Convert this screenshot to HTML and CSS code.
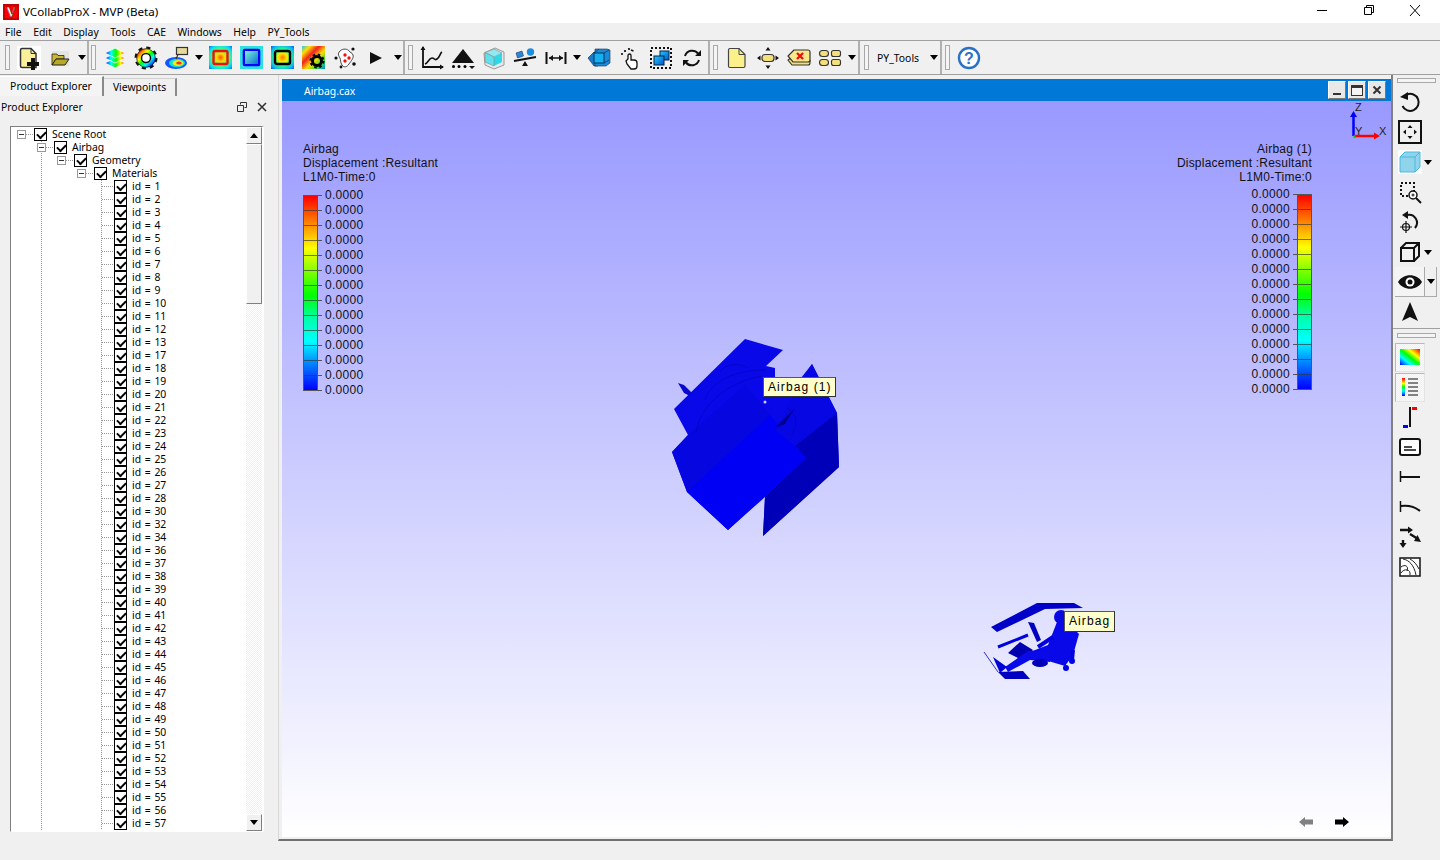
FILE: index.html
```html
<!DOCTYPE html>
<html lang="en">
<head>
<meta charset="utf-8">
<title>VCollabProX - MVP (Beta)</title>
<link rel="stylesheet" href="styles.css">
</head>
<body>
<svg class="defs" aria-hidden="true">
  <defs>
    <linearGradient id="rb" x1="0" y1="0" x2="1" y2="1"><stop offset="0" stop-color="#f00"/><stop offset=".3" stop-color="#ff0"/><stop offset=".5" stop-color="#0f0"/><stop offset=".72" stop-color="#0ff"/><stop offset="1" stop-color="#00f"/></linearGradient>
    <linearGradient id="rbd" x1="1" y1="0" x2="0" y2="1"><stop offset="0" stop-color="#f00"/><stop offset=".3" stop-color="#ff0"/><stop offset=".5" stop-color="#0f0"/><stop offset=".72" stop-color="#0ff"/><stop offset="1" stop-color="#00f"/></linearGradient>
    <linearGradient id="rbh" x1="0" y1="0" x2="1" y2="0"><stop offset="0" stop-color="#00f"/><stop offset=".3" stop-color="#0ff"/><stop offset=".55" stop-color="#0f0"/><stop offset=".78" stop-color="#ff0"/><stop offset="1" stop-color="#f00"/></linearGradient>
    <linearGradient id="rbv" x1="0" y1="0" x2="0" y2="1"><stop offset="0" stop-color="#f00"/><stop offset=".3" stop-color="#ff0"/><stop offset=".5" stop-color="#0f0"/><stop offset=".72" stop-color="#0ff"/><stop offset="1" stop-color="#00f"/></linearGradient>
    <radialGradient id="c1" r=".72"><stop offset="0" stop-color="#f50"/><stop offset=".25" stop-color="#fd0"/><stop offset=".5" stop-color="#4f7"/><stop offset=".75" stop-color="#1de"/><stop offset="1" stop-color="#06f"/></radialGradient>
    <radialGradient id="c3" r=".72"><stop offset="0" stop-color="#f70"/><stop offset=".28" stop-color="#fe0"/><stop offset=".5" stop-color="#2f8"/><stop offset=".75" stop-color="#1be"/><stop offset="1" stop-color="#05f"/></radialGradient>
    <linearGradient id="c4" x1="0" y1="0" x2="1" y2="1"><stop offset="0" stop-color="#2ce"/><stop offset=".18" stop-color="#fd0"/><stop offset=".38" stop-color="#e22"/><stop offset=".58" stop-color="#fd0"/><stop offset=".8" stop-color="#3d3"/><stop offset="1" stop-color="#08f"/></linearGradient>
    <linearGradient id="bl" x1="0" y1="0" x2="1" y2="1"><stop offset="0" stop-color="#2cf"/><stop offset="1" stop-color="#05c"/></linearGradient>
    <linearGradient id="sky" x1="0" y1="0" x2="1" y2="1"><stop offset="0" stop-color="#8fd"/><stop offset="1" stop-color="#06c"/></linearGradient>
  </defs>
</svg>

<div class="app">
  <header class="titlebar">
    <svg class="logo" viewBox="0 0 16 16"><rect width="16" height="16" fill="#e30613"/><rect x="1" y="1" width="14" height="14" fill="#f00" stroke="#600" stroke-width=".6"/><text x="8" y="13" text-anchor="middle" class="logo-v">V</text></svg>
    <span class="apptitle">VCollabProX - MVP (Beta)</span>
    <div class="winctl">
      <svg class="wc" viewBox="0 0 46 23"><path d="M17 10.500h10" stroke="#000" fill="none"/></svg>
      <svg class="wc" viewBox="0 0 46 23"><path d="M18.500 7.500h7v7h-7zM20.500 7.500v-2h7v7h-2" stroke="#000" fill="none"/></svg>
      <svg class="wc" viewBox="0 0 46 23"><path d="M18 5l10 11M28 5l-10 11" stroke="#000" fill="none"/></svg>
    </div>
  </header>

  <nav class="menubar">
    <span>File</span><span>Edit</span><span>Display</span><span>Tools</span><span>CAE</span><span>Windows</span><span>Help</span><span>PY_Tools</span>
  </nav>

  <div class="toolbar">
    <div class="tg tg1">
      <i class="grip"></i>
      <div class="tb"><svg class="ic plate" viewBox="0 0 24 24"><path d="M5 2.500h9l5 5v14H5a1.500 1.500 0 0 1-1.500-1.500V4A1.500 1.500 0 0 1 5 2.500z" fill="#fbf09a" stroke="#333" stroke-width="1.500"/><path d="M14 2.500v5h5" fill="none" stroke="#333"/><path d="M14 12h4v4h4v4h-4v4h-4v-4h-4v-4h4z" fill="#111"/></svg></div>
      <div class="tb"><svg class="ic" viewBox="0 0 24 24"><rect x="4" y="5" width="17" height="15" fill="#e4e4e4"/><path d="M4 8h5l1 1.500h6V13H8l-4 6z" fill="#c8b830" stroke="#222" stroke-width=".8"/><path d="M4 19l4-6h13l-4 6z" fill="#b8a828" stroke="#222"/></svg></div>
      <div class="dd"><i class="tri"></i></div>
    </div>
    <div class="tg tg2">
      <i class="grip"></i>
      <div class="tb"><svg class="ic" viewBox="0 0 24 24"><path d="M2 17l10-5 10 5-10 5z" fill="url(#rbh)" stroke="#fff" stroke-width=".8"/><path d="M2 12l10-5 10 5-10 5z" fill="url(#rbh)" stroke="#fff" stroke-width=".8"/><path d="M2 7l10-5 10 5-10 5z" fill="url(#rbh)" stroke="#fff" stroke-width=".8"/></svg></div>
      <div class="tb"><svg class="ic" viewBox="0 0 24 24"><circle cx="12" cy="12" r="10" fill="none" stroke="#111" stroke-width="3" stroke-dasharray="4 3.850"/><circle cx="12" cy="12" r="7.300" fill="none" stroke="url(#rb)" stroke-width="4.500"/><circle cx="12" cy="12" r="9.300" fill="none" stroke="#111" stroke-width=".7"/><circle cx="12" cy="12" r="4.500" fill="#fff" stroke="#111" stroke-width="1.500"/></svg></div>
      <div class="tb"><svg class="ic" viewBox="0 0 24 24"><ellipse cx="11" cy="17" rx="11" ry="6" fill="#15f"/><ellipse cx="12" cy="17" rx="8" ry="4.200" fill="#1dd"/><ellipse cx="13" cy="17" rx="5.500" ry="3" fill="#ee1"/><ellipse cx="14" cy="17" rx="2.800" ry="1.500" fill="#e33"/><rect x="11.500" y="1.500" width="11" height="7" fill="#e6d99a" stroke="#333" stroke-width="1.200"/><path d="M13 8.500L11 13" stroke="#333" stroke-width="1.200"/></svg></div>
      <div class="dd"><i class="tri"></i></div>
      <div class="tb"><svg class="ic sq" viewBox="0 0 23 23"><rect width="23" height="23" fill="url(#c1)"/><rect x="4.500" y="5" width="14" height="13" rx="1.500" fill="none" stroke="#e11" stroke-width="2.400"/></svg></div>
      <div class="tb"><svg class="ic sq" viewBox="0 0 24 24"><rect width="24" height="24" fill="#2fe0e0"/><rect x="4" y="4" width="16" height="16" rx="1" fill="url(#sky)" stroke="#00f" stroke-width="2.400"/></svg></div>
      <div class="tb"><svg class="ic sq" viewBox="0 0 23 23"><rect width="23" height="23" fill="url(#c3)"/><rect x="4" y="5" width="15" height="13" rx="2" fill="none" stroke="#000" stroke-width="2.400"/></svg></div>
      <div class="tb"><svg class="ic sq" viewBox="0 0 23 23"><rect width="23" height="23" fill="url(#c4)"/><circle cx="15" cy="15" r="4.500" fill="none" stroke="#000" stroke-width="3"/><circle cx="15" cy="15" r="6.500" fill="none" stroke="#000" stroke-width="2" stroke-dasharray="2.500 2.600"/></svg></div>
      <div class="tb"><svg class="ic" viewBox="0 0 24 24"><path d="M7 5c3-3 8-2 9 0s3 1 4 4-2 6-4 9-5 4-7 1-1-5-2-7-3-4 0-7z" fill="#fff" stroke="#333" stroke-width=".9"/><circle cx="12" cy="9" r="1.700" fill="#e11"/><circle cx="16" cy="12" r="1.700" fill="#e11"/><circle cx="12" cy="15" r="1.700" fill="#e11"/><circle cx="3" cy="12" r="1.600" fill="#111"/><circle cx="20" cy="3" r="1.600" fill="#111"/><circle cx="21" cy="18" r="1.800" fill="#111"/><circle cx="8" cy="21" r="1.400" fill="#111"/></svg></div>
      <div class="tb"><svg class="ic" viewBox="0 0 24 24"><path d="M6 6l12 6-12 6z" fill="#111"/></svg></div>
      <div class="dd"><i class="tri"></i></div>
    </div>
    <div class="tg tg3">
      <i class="grip"></i>
      <div class="tb"><svg class="ic" viewBox="0 0 24 24"><path d="M3 1v20h20" fill="none" stroke="#111" stroke-width="1.800"/><path d="M3 0l-2.500 4h5zM24 21l-4-2.500v5z" fill="#111"/><path d="M5 18c3-1 4-6 7-6s2 3 5 1 3-6 5-7" fill="none" stroke="#111" stroke-width="1.600"/></svg></div>
      <div class="tb"><svg class="ic" viewBox="0 0 24 24"><path d="M12 3l11 14H1z" fill="#111"/><circle cx="2.500" cy="20.500" r="1.500"/><circle cx="8" cy="20.500" r="1.500"/><circle cx="14" cy="20.500" r="1.500"/><path d="M18 20h6l-3 3z" fill="#111"/></svg></div>
      <div class="tb"><svg class="ic" viewBox="0 0 24 24"><path d="M2 7l11-5 9 4v13l-10 4-9-4z" fill="#e8e8e8" stroke="#999"/><path d="M3 6.500l9-3.500 8 4-8 4z" fill="#8feaf2" stroke="#888" stroke-width=".6"/><path d="M12 11l8-4v9l-8 4z" fill="#2fd8e8"/><path d="M3 6.500l9 4.500v9l-9-4z" fill="#60e0ea" stroke="#888" stroke-width=".6"/></svg></div>
      <div class="tb"><svg class="ic" viewBox="0 0 24 24"><path d="M1 15l22-4" stroke="#111" stroke-width="1.800"/><path d="M3 7l6-2 1.500 5-6 2z" fill="#2a86d8" stroke="#125" stroke-width=".5"/><circle cx="17.500" cy="6" r="3.700" fill="#1a8fe0"/><path d="M12 15l-3 5h6z" fill="#111"/></svg></div>
      <div class="tb"><svg class="ic" viewBox="0 0 24 24"><path d="M2.500 6v12M21.500 6v12" stroke="#111" stroke-width="2"/><path d="M5 12h14" stroke="#111" stroke-width="1.500"/><path d="M5 12l4-3v6zM19 12l-4-3v6z" fill="#111"/></svg></div>
      <div class="dd dd12"><i class="tri"></i></div>
      <div class="tb"><svg class="ic" viewBox="0 0 24 24"><path d="M1 12l6-6h6l-2 4v10H7z" fill="#1a7cc8" stroke="#124" stroke-width=".6"/><path d="M8 3h12l3 1v13l-4 3H8z" fill="#1d8ad8" stroke="#135" stroke-width=".6"/><rect x="7" y="7" width="10" height="10" fill="#15b0f0" stroke="#036"/><path d="M7 7l5-4M17 7l5-3M17 17l5-3" stroke="#036" stroke-width=".7"/></svg></div>
      <div class="tb"><svg class="ic" viewBox="0 0 24 24"><path d="M10 13V9.500a1.500 1.500 0 0 1 3 0V14h3a3 3 0 0 1 3 3v3a3 3 0 0 1-3 3h-3l-4-5-1-3z" fill="#fff" stroke="#111" stroke-width="1.300"/><circle cx="7" cy="5" r="1.100"/><circle cx="11" cy="3" r="1.100"/><circle cx="4" cy="8" r="1"/><path d="M13 4l2.500 1" stroke="#111" stroke-width="1.500"/></svg></div>
      <div class="tb"><svg class="ic" viewBox="0 0 24 24"><rect x="2" y="2" width="20" height="20" fill="none" stroke="#111" stroke-width="2" stroke-dasharray="2 2"/><rect x="11" y="5" width="9" height="9" fill="url(#bl)" stroke="#024"/><rect x="5" y="10" width="10" height="9" fill="url(#bl)" stroke="#024"/></svg></div>
      <div class="tb"><svg class="ic" viewBox="0 0 24 24"><path d="M5 10a7.500 7.500 0 0 1 13-2.500M19 14a7.500 7.500 0 0 1-13 2.500" fill="none" stroke="#111" stroke-width="2"/><path d="M21 4v6h-6zM3 20v-6h6z" fill="#111"/></svg></div>
    </div>
    <div class="tg tg4">
      <i class="grip"></i>
      <div class="tb"><svg class="ic" viewBox="0 0 24 24"><path d="M5 2.500h9l6 6V20a1.500 1.500 0 0 1-1.500 1.500H5A1.500 1.500 0 0 1 3.500 20V4A1.500 1.500 0 0 1 5 2.500z" fill="#fbf08a" stroke="#444" stroke-width="1.200"/><path d="M14 2.500v6h6" fill="none" stroke="#444"/></svg></div>
      <div class="tb"><svg class="ic" viewBox="0 0 24 24"><rect x="6" y="8.500" width="12" height="7" rx="3" fill="#f4e07a" stroke="#333" stroke-width="1.200"/><path d="M12 1l2.500 3.500h-5zM12 23l2.500-3.500h-5zM1 12l3.500-2.500v5zM23 12l-3.500-2.500v5z" fill="#111"/></svg></div>
      <div class="tb"><svg class="ic" viewBox="0 0 24 24"><path d="M6 10L1 14l4 5h16a2 2 0 0 0 2-2v-3" fill="#f4e07a" stroke="#333" stroke-width="1.100"/><path d="M7 4L1 10l5 6h15a2 2 0 0 0 2-2V6a2 2 0 0 0-2-2z" fill="#f8e88a" stroke="#333" stroke-width="1.200"/><path d="M10 7l6 6M16 7l-6 6" stroke="#e11" stroke-width="2.400"/></svg></div>
      <div class="tb"><svg class="ic" viewBox="0 0 24 24"><g fill="#f4e07a" stroke="#333" stroke-width="1.100"><rect x="1.500" y="4.500" width="9" height="6" rx="3"/><rect x="13.500" y="4.500" width="9" height="6" rx="2"/><rect x="1.500" y="13.500" width="9" height="6" rx="3"/><rect x="13.500" y="13.500" width="9" height="6" rx="2"/></g></svg></div>
      <div class="dd"><i class="tri"></i></div>
    </div>
    <div class="tg tg5">
      <i class="grip"></i>
      <span class="pytools">PY_Tools</span>
      <div class="dd"><i class="tri"></i></div>
    </div>
    <div class="tg tg6">
      <i class="grip"></i>
      <div class="tb"><svg class="ic" viewBox="0 0 24 24"><circle cx="12" cy="12" r="10" fill="#fff" stroke="#2a72c8" stroke-width="2.400"/><text x="12" y="17.500" text-anchor="middle" class="help-q">?</text></svg></div>
    </div>
  </div>

  <main class="workspace">
    <aside class="dock">
      <div class="tabs">
        <span class="tab active">Product Explorer</span>
        <span class="tab">Viewpoints</span>
      </div>
      <div class="dockhead">
        <span class="docktitle">Product Explorer</span>
        <svg class="dockbtn" viewBox="0 0 10 10"><path d="M3.500 2.500V.500h6v5h-2M.500 3.500h6v6h-6z" fill="none" stroke="#333"/></svg>
        <svg class="dockbtn" viewBox="0 0 10 10"><path d="M1 1l8 8M9 1l-8 8" fill="none" stroke="#333" stroke-width="1.600"/></svg>
      </div>
      <div class="treebox">
        <div class="tree">
          <div class="row lv0"><i class="exp"></i><i class="dots"></i><i class="cb"></i><span>Scene Root</span></div>
          <div class="rest">
            <div class="row lv1"><i class="exp"></i><i class="dots"></i><i class="cb"></i><span>Airbag</span></div>
            <div class="row lv2"><i class="exp"></i><i class="dots"></i><i class="cb"></i><span>Geometry</span></div>
            <div class="row lv3"><i class="exp"></i><i class="dots"></i><i class="cb"></i><span>Materials</span></div>
            <div class="ids">
              <div class="row leaf"><i class="stub"></i><i class="cb"></i><span>id = 1</span></div>
              <div class="row leaf"><i class="stub"></i><i class="cb"></i><span>id = 2</span></div>
              <div class="row leaf"><i class="stub"></i><i class="cb"></i><span>id = 3</span></div>
              <div class="row leaf"><i class="stub"></i><i class="cb"></i><span>id = 4</span></div>
              <div class="row leaf"><i class="stub"></i><i class="cb"></i><span>id = 5</span></div>
              <div class="row leaf"><i class="stub"></i><i class="cb"></i><span>id = 6</span></div>
              <div class="row leaf"><i class="stub"></i><i class="cb"></i><span>id = 7</span></div>
              <div class="row leaf"><i class="stub"></i><i class="cb"></i><span>id = 8</span></div>
              <div class="row leaf"><i class="stub"></i><i class="cb"></i><span>id = 9</span></div>
              <div class="row leaf"><i class="stub"></i><i class="cb"></i><span>id = 10</span></div>
              <div class="row leaf"><i class="stub"></i><i class="cb"></i><span>id = 11</span></div>
              <div class="row leaf"><i class="stub"></i><i class="cb"></i><span>id = 12</span></div>
              <div class="row leaf"><i class="stub"></i><i class="cb"></i><span>id = 13</span></div>
              <div class="row leaf"><i class="stub"></i><i class="cb"></i><span>id = 17</span></div>
              <div class="row leaf"><i class="stub"></i><i class="cb"></i><span>id = 18</span></div>
              <div class="row leaf"><i class="stub"></i><i class="cb"></i><span>id = 19</span></div>
              <div class="row leaf"><i class="stub"></i><i class="cb"></i><span>id = 20</span></div>
              <div class="row leaf"><i class="stub"></i><i class="cb"></i><span>id = 21</span></div>
              <div class="row leaf"><i class="stub"></i><i class="cb"></i><span>id = 22</span></div>
              <div class="row leaf"><i class="stub"></i><i class="cb"></i><span>id = 23</span></div>
              <div class="row leaf"><i class="stub"></i><i class="cb"></i><span>id = 24</span></div>
              <div class="row leaf"><i class="stub"></i><i class="cb"></i><span>id = 25</span></div>
              <div class="row leaf"><i class="stub"></i><i class="cb"></i><span>id = 26</span></div>
              <div class="row leaf"><i class="stub"></i><i class="cb"></i><span>id = 27</span></div>
              <div class="row leaf"><i class="stub"></i><i class="cb"></i><span>id = 28</span></div>
              <div class="row leaf"><i class="stub"></i><i class="cb"></i><span>id = 30</span></div>
              <div class="row leaf"><i class="stub"></i><i class="cb"></i><span>id = 32</span></div>
              <div class="row leaf"><i class="stub"></i><i class="cb"></i><span>id = 34</span></div>
              <div class="row leaf"><i class="stub"></i><i class="cb"></i><span>id = 36</span></div>
              <div class="row leaf"><i class="stub"></i><i class="cb"></i><span>id = 37</span></div>
              <div class="row leaf"><i class="stub"></i><i class="cb"></i><span>id = 38</span></div>
              <div class="row leaf"><i class="stub"></i><i class="cb"></i><span>id = 39</span></div>
              <div class="row leaf"><i class="stub"></i><i class="cb"></i><span>id = 40</span></div>
              <div class="row leaf"><i class="stub"></i><i class="cb"></i><span>id = 41</span></div>
              <div class="row leaf"><i class="stub"></i><i class="cb"></i><span>id = 42</span></div>
              <div class="row leaf"><i class="stub"></i><i class="cb"></i><span>id = 43</span></div>
              <div class="row leaf"><i class="stub"></i><i class="cb"></i><span>id = 44</span></div>
              <div class="row leaf"><i class="stub"></i><i class="cb"></i><span>id = 45</span></div>
              <div class="row leaf"><i class="stub"></i><i class="cb"></i><span>id = 46</span></div>
              <div class="row leaf"><i class="stub"></i><i class="cb"></i><span>id = 47</span></div>
              <div class="row leaf"><i class="stub"></i><i class="cb"></i><span>id = 48</span></div>
              <div class="row leaf"><i class="stub"></i><i class="cb"></i><span>id = 49</span></div>
              <div class="row leaf"><i class="stub"></i><i class="cb"></i><span>id = 50</span></div>
              <div class="row leaf"><i class="stub"></i><i class="cb"></i><span>id = 51</span></div>
              <div class="row leaf"><i class="stub"></i><i class="cb"></i><span>id = 52</span></div>
              <div class="row leaf"><i class="stub"></i><i class="cb"></i><span>id = 53</span></div>
              <div class="row leaf"><i class="stub"></i><i class="cb"></i><span>id = 54</span></div>
              <div class="row leaf"><i class="stub"></i><i class="cb"></i><span>id = 55</span></div>
              <div class="row leaf"><i class="stub"></i><i class="cb"></i><span>id = 56</span></div>
              <div class="row leaf"><i class="stub"></i><i class="cb"></i><span>id = 57</span></div>
            </div>
          </div>
        </div>
        <div class="vscroll">
          <div class="sbtn"><i class="tri up"></i></div>
          <div class="thumb"></div>
          <div class="track"></div>
          <div class="sbtn"><i class="tri"></i></div>
        </div>
      </div>
    </aside>

    <section class="mdi">
      <div class="mdiwin">
        <div class="wintitle">
          <span class="winname">Airbag.cax</span>
          <div class="winbtns">
            <span class="wbtn"><i class="wmin"></i></span>
            <span class="wbtn"><i class="wmax"></i></span>
            <span class="wbtn"><svg class="wx" viewBox="0 0 10 10"><path d="M1.500 1.500l7 7M8.500 1.500l-7 7" stroke="#333" stroke-width="2"/></svg></span>
          </div>
        </div>
        <div class="viewport">
          <svg class="scene" viewBox="282 101 1108 737">
            <!-- airbag model 1 -->
            <polygon points="745,339 783,350 766,366 775,368 775,378 790,392 812,364 837,413 839,467 763,536 765,497 728,530 687,492 672,452 688,435 674,409" fill="#0808e8"/>
            <polygon points="837,413 839,467 763,536 765,497 806,458 795,446" fill="#0000b8"/>
            <polygon points="687,492 770,415 806,458 728,530" fill="#0000f4"/>
            <polygon points="672,452 688,435 745,385 770,415 687,492" fill="#0606e0"/>
            <polygon points="812,364 837,413 795,446 775,430" fill="#0707e4"/>
            <polygon points="775,428 795,408 785,424" fill="#000090"/>
            <path d="M705,400c5-18 30-30 60-30M696,432c4-25 30-50 66-56M720,372c5-8 18-10 28-4M787,408c8 4 12 14 5 27" fill="none" stroke="#0404c4" stroke-width=".8"/>
            <polygon points="678,383 684,385 692,393 690,396 684,393" fill="#0808d0"/>
            <circle cx="765" cy="402" r="1.500" fill="#c8ccff"/>
            <!-- occupant model -->
            <polygon points="991,627 1037,603 1074,603 1083,608 1045,609 997,632" fill="#0000c8"/>
            <circle cx="1061" cy="617" r="7" fill="#0808e0"/>
            <polygon points="1057,622 1066,622 1075,630 1079,634 1073,655 1065,666 1045,660 1030,652 1048,645" fill="#0808e8"/>
            <path d="M1053,637l-15,10M1073,650l-1,10" stroke="#0000e0" stroke-width="4" fill="none"/>
            <circle cx="1072" cy="661" r="3" fill="#0000e8"/>
            <circle cx="1066" cy="668" r="3" fill="#0000e8"/>
            <polygon points="1028,622 1034,623 1041,640 1037,642" fill="#0000c0"/>
            <path d="M998,647l30-12" stroke="#0000e0" stroke-width="3"/>
            <polygon points="1008,653 1020,642 1033,650 1022,660" fill="#0000b0"/>
            <polygon points="1005,667 1028,651 1052,650 1050,662 1030,660 1008,672" fill="#0a0ae8"/>
            <ellipse cx="1040" cy="663" rx="8" ry="4" fill="#0000b8"/>
            <polygon points="998,672 1023,671 1030,679 1005,679" fill="#0000c0"/>
            <polygon points="993,657 1007,667 1000,673" fill="#0000d8"/>
            <path d="M984,652l14,20" stroke="#3030d0"/>
            <!-- triad -->
            <path d="M1353.500,136v-22" stroke="#00f" stroke-width="2.500"/><path d="M1353.500,111l-3.500,6h7z" fill="#00f"/>
            <path d="M1354,136h22" stroke="#f00" stroke-width="2.500"/><path d="M1380,136l-6-3.500v7z" fill="#f00"/>
            <path d="M1353.500,136.500h2" stroke="#0c0" stroke-width="2.500"/>
            <text x="1355" y="111" class="axis">Z</text><text x="1355" y="135" class="axis">Y</text><text x="1379" y="135" class="axis">X</text>
          </svg>

          <div class="legend left">
            <div class="legtext"><div>Airbag</div><div>Displacement :Resultant</div><div>L1M0-Time:0</div></div>
            <div class="scale">
              <div class="bar"></div>
              <div class="vals"><span>0.0000</span><span>0.0000</span><span>0.0000</span><span>0.0000</span><span>0.0000</span><span>0.0000</span><span>0.0000</span><span>0.0000</span><span>0.0000</span><span>0.0000</span><span>0.0000</span><span>0.0000</span><span>0.0000</span><span>0.0000</span></div>
            </div>
          </div>
          <div class="legend right">
            <div class="legtext"><div>Airbag (1)</div><div>Displacement :Resultant</div><div>L1M0-Time:0</div></div>
            <div class="scale">
              <div class="vals"><span>0.0000</span><span>0.0000</span><span>0.0000</span><span>0.0000</span><span>0.0000</span><span>0.0000</span><span>0.0000</span><span>0.0000</span><span>0.0000</span><span>0.0000</span><span>0.0000</span><span>0.0000</span><span>0.0000</span><span>0.0000</span></div>
              <div class="bar"></div>
            </div>
          </div>

          <div class="tag tag1">Airbag (1)</div>
          <div class="tag tag2">Airbag</div>

          <svg class="nav navl" viewBox="0 0 14 12"><path d="M0 6l6-5v2.500h8v5H6V11z" fill="#808080"/></svg>
          <svg class="nav navr" viewBox="0 0 14 12"><path d="M14 6L8 1v2.500H0v5h8V11z" fill="#000"/></svg>
        </div>
      </div>
    </section>

    <aside class="sidebar">
      <i class="hgrip"></i>
      <div class="sb"><svg class="ic" viewBox="0 0 24 24"><path d="M9 4.500A8.500 8.500 0 1 1 4.500 16" fill="none" stroke="#111" stroke-width="2"/><path d="M2 7l8-5v8z" fill="#111"/></svg></div>
      <div class="sb"><svg class="ic" viewBox="0 0 24 24"><rect x="1" y="1" width="22" height="22" fill="none" stroke="#111" stroke-width="2"/><path d="M12 5l2.500 3h-5zM12 19l2.500-3h-5zM5 12l3-2.500v5zM19 12l-3-2.500v5z" fill="#111"/></svg></div>
      <div class="sb"><svg class="ic" viewBox="0 0 24 24"><rect width="24" height="24" fill="#fff"/><path d="M2 7l5-5h15v15l-5 5H2z" fill="#8fd4ea" stroke="#4ab8e0"/><path d="M2 7h15v15M17 7l5-5" fill="none" stroke="#4ab8e0"/></svg><div class="dd"><i class="tri"></i></div></div>
      <div class="sb"><svg class="ic" viewBox="0 0 24 24"><rect x="3" y="3" width="13" height="13" fill="none" stroke="#111" stroke-width="2" stroke-dasharray="2 2"/><circle cx="15" cy="15" r="4" fill="#fff" stroke="#111" stroke-width="1.500"/><path d="M18 18l5 5" stroke="#111" stroke-width="2"/><path d="M13.500 15h3M15 13.500v3" stroke="#111"/></svg></div>
      <div class="sb"><svg class="ic" viewBox="0 0 24 24"><path d="M9 5a8 8 0 0 1 8 13" fill="none" stroke="#111" stroke-width="2"/><path d="M4 5l6-4v8z" fill="#111"/><circle cx="8" cy="17" r="3.500" fill="none" stroke="#111" stroke-width="1.200"/><path d="M2 17h12M8 11v12" stroke="#111" stroke-width="1.200"/></svg></div>
      <div class="sb"><svg class="ic" viewBox="0 0 24 24"><path d="M3 8h13v13H3zM3 8l5-5h13v13l-5 5M16 8l5-5" fill="none" stroke="#111" stroke-width="2"/></svg><div class="dd"><i class="tri"></i></div></div>
      <div class="sb eyewrap"><span class="eyebtn"><svg class="ic" viewBox="0 0 24 24"><path d="M0 12c5-9 19-9 24 0-5 9-19 9-24 0z" fill="#111"/><circle cx="12" cy="12" r="4.500" fill="#fff"/><circle cx="12" cy="12" r="2.500" fill="#111"/></svg></span><span class="eyedd"><i class="tri"></i></span></div>
      <div class="sb"><svg class="ic" viewBox="0 0 24 24"><path d="M12 2l8 19-8-4-8 4z" fill="#111"/></svg></div>
      <i class="hrule"></i>
      <i class="hgrip"></i>
      <div class="sb"><span class="pressed"><svg class="ic" viewBox="0 0 24 24"><rect x="2" y="4" width="20" height="16" fill="url(#rbd)"/></svg></span></div>
      <div class="sb"><span class="pressed"><svg class="ic" viewBox="0 0 24 24"><rect x="4" y="3" width="3" height="18" fill="url(#rbv)"/><path d="M10 4h10M10 8h10M10 12h10M10 16h10M10 20h10" stroke="#111" stroke-width="1.200"/></svg></span></div>
      <div class="sb"><svg class="ic" viewBox="0 0 24 24"><path d="M12 2v20" stroke="#111" stroke-width="2"/><rect x="14" y="2" width="5" height="3" fill="#f00"/><rect x="5" y="20" width="5" height="3" fill="#00f"/></svg></div>
      <div class="sb"><svg class="ic" viewBox="0 0 24 24"><rect x="2" y="4" width="20" height="16" rx="2" fill="#fff" stroke="#111" stroke-width="2"/><path d="M6 12h8M6 15h12" stroke="#111" stroke-width="1.500"/></svg></div>
      <div class="sb"><svg class="ic" viewBox="0 0 24 24"><path d="M2.500 6v11" stroke="#111" stroke-width="1.500"/><path d="M3 12h19" stroke="#111" stroke-width="2"/></svg></div>
      <div class="sb"><svg class="ic" viewBox="0 0 24 24"><path d="M2.500 6v11" stroke="#111" stroke-width="1.500"/><path d="M3 11c7-1 14 1 19 5" fill="none" stroke="#111" stroke-width="2"/></svg></div>
      <div class="sb"><svg class="ic" viewBox="0 0 24 24"><path d="M2 5h9M5 15v6M12 9l8 5" stroke="#111" stroke-width="2.400"/><path d="M15 5l-5-3.500v7zM5 23l3.500-5h-7zM23 17l-7-1 3.500-6z" fill="#111"/></svg></div>
      <div class="sb"><svg class="ic" viewBox="0 0 24 24"><rect x="2" y="3" width="20" height="18" fill="#fff" stroke="#111" stroke-width="1.500"/><path d="M3 12c4-3 8-1 6 4M3 18c3-5 10-4 9 2M5 4c6 1 11 6 13 16M12 4c4 2 7 6 9 10" fill="none" stroke="#222"/></svg></div>
    </aside>
  </main>

  <footer class="status"></footer>
</div>
</body>
</html>
```
FILE: styles.css
```css
* { box-sizing: border-box; }
html, body { margin: 0; padding: 0; height: 100%; overflow: hidden; }
body { background: #f0f0f0; color: #000; font: 10.400px/13px "Noto Sans", sans-serif; }
i { display: block; font-style: normal; }
.defs { position: absolute; width: 0; height: 0; }
.app { display: flex; flex-direction: column; width: 1440px; height: 860px; }

/* title + menu */
.titlebar { display: flex; align-items: center; height: 23px; background: #fff; padding-left: 3px; flex: none; }
.logo { width: 16px; height: 16px; margin-right: 4px; }
.logo-v { font: bold 14px "Liberation Serif", serif; fill: #fff; stroke: #300; stroke-width: .4px; }
.apptitle { font-size: 11.600px; }
.winctl { margin-left: auto; display: flex; padding-right: 2px; }
.wc { width: 46px; height: 23px; display: block; }
.menubar { display: flex; height: 17px; flex: none; align-items: center; padding: 2px 0 0 5px; gap: 11.500px; background: #f0f0f0; }

/* toolbar */
.toolbar { display: flex; height: 35px; flex: none; border-top: 1px solid #a0a0a0; border-bottom: 1px solid #a0a0a0; }
.tg { display: flex; align-items: center; height: 33px; border-right: 2px solid #b0b0b0; }
.tg1 { width: 89px; padding-left: 5px; }
.tg2 { width: 317px; padding-left: 3px; margin-left: -1px; }
.tg3 { width: 305px; padding-left: 3px; }
.tg4 { width: 150px; padding-left: 3px; }
.tg5 { width: 82px; padding-left: 4px; }
.tg6 { border-right: 0; padding-left: 3px; }
.grip { width: 5px; height: 25px; margin-right: 3px; border: 1px solid #a8a8a8; background: #f4f4f4; flex: none; }
.tb { width: 31px; height: 31px; display: flex; align-items: center; justify-content: center; flex: none; }
.dd { width: 13px; height: 31px; display: flex; align-items: center; justify-content: center; flex: none; }
.dd12 { width: 12px; }
.tri { width: 0; height: 0; border-left: 4.500px solid transparent; border-right: 4.500px solid transparent; border-top: 5px solid #000; }
.tri.up { border-top: 0; border-bottom: 5px solid #000; }
.ic { width: 24px; height: 24px; display: block; flex: none; }
.plate { background: #fff; }
.sq { width: 23px; height: 23px; }
.pytools { margin: 2px 0 0 5px; width: 53px; }
.help-q { font: bold 16px "Liberation Sans", sans-serif; fill: #2a72c8; }

/* workspace */
.workspace { display: flex; flex: 1; min-height: 0; }
.dock { width: 278px; flex: none; display: flex; flex-direction: column; }
.tabs { display: flex; height: 20px; margin-top: 1px; flex: none; align-items: flex-end; }
.tab { height: 18px; padding: 2px 8px 0; width: 73px; border-right: 2px solid #8a8a8a; border-top: 1px solid #d0d0d0; background: #f0f0f0; text-align: center; white-space: nowrap; }
.tab.active { height: 20px; width: 104px; padding-top: 3px; border-top: 1px solid #fff; background: #f4f4f4; }
.dockhead { display: flex; align-items: center; height: 22px; padding: 0 11px 0 1px; flex: none; gap: 10px; }
.docktitle { margin-right: auto; }
.dockbtn { width: 10px; height: 10px; display: block; }
.treebox { display: flex; margin: 8px 0 0 10px; width: 254px; height: 706px; border: 1px solid #808080; border-width: 1px 2px 1px 1px; border-color: #808080 #fff #fff #808080; background: #fff; overflow: hidden; flex: none; }
.tree { flex: 1; min-width: 0; overflow: hidden; padding-top: 1px; }
.rest { background: linear-gradient(#999 50%, transparent 50%) 30px 0 / 1px 2px repeat-y; }
.ids { background: linear-gradient(#999 50%, transparent 50%) 90px 0 / 1px 2px repeat-y; }
.row { display: flex; align-items: center; height: 13px; white-space: nowrap; }
.row span { margin-left: 5px; }
.leaf span { word-spacing: 1px; }
.lv0 { padding-left: 6px; }
.lv1 { padding-left: 26px; }
.lv2 { padding-left: 46px; }
.lv3 { padding-left: 66px; }
.leaf { padding-left: 91px; }
.exp { width: 9px; height: 9px; border: 1px solid #999; background: linear-gradient(#333, #333) center / 5px 1px no-repeat #fff; flex: none; }
.dots { width: 9px; height: 1px; margin-right: -1px; background: linear-gradient(90deg, #999 50%, transparent 50%) 0 0 / 2px 1px repeat-x; flex: none; }
.stub { width: 12px; height: 1px; background: linear-gradient(90deg, #999 50%, transparent 50%) 0 0 / 2px 1px repeat-x; flex: none; }
.cb { width: 13px; height: 13px; border: 1.500px solid #000; background: #fff; position: relative; flex: none; }
.cb::after { content: ""; position: absolute; left: 2px; top: 1.500px; width: 7px; height: 4px; border-left: 2px solid #000; border-bottom: 2px solid #000; transform: rotate(-45deg); }
.vscroll { width: 16px; flex: none; display: flex; flex-direction: column; }
.sbtn { height: 17px; flex: none; background: #f0f0f0; border: 1px solid; border-color: #fff #808080 #808080 #fff; display: flex; align-items: center; justify-content: center; }
.thumb { height: 160px; flex: none; background: #f0f0f0; border: 1px solid; border-color: #fff #808080 #808080 #fff; }
.track { flex: 1; background: repeating-conic-gradient(#f0f0f0 0 25%, #fff 0 50%) 0 0 / 2px 2px; }

/* mdi */
.mdi { width: 1115px; flex: none; display: flex; height: 766px; border-right: 2px solid #808080; border-bottom: 2px solid #707070; border-left: 1px solid #d8d8d8; padding: 4px 0 0 3px; background: #f0f0f0; }
.mdiwin { flex: 1; display: flex; flex-direction: column; margin-bottom: 2px; }
.wintitle { display: flex; align-items: center; height: 22px; background: #0078d7; flex: none; color: #fff; padding-left: 22px; }
.winname { margin: 2px auto 0 0; }
.winbtns { display: flex; gap: 2px; padding-right: 5px; }
.wbtn { width: 18px; height: 18px; background: #e8e8e8; border: 1px solid; border-color: #fff #777 #777 #fff; display: flex; align-items: center; justify-content: center; }
.wmin { width: 8px; height: 2px; background: #333; margin-top: 7px; }
.wmax { width: 12px; height: 11px; border: 1px solid #333; border-top-width: 3px; background: #f4f4f4; }
.wx { width: 10px; height: 10px; display: block; }
.viewport { flex: 1; position: relative; background: linear-gradient(#9999ff, #ffffff); overflow: hidden; }
.scene { position: absolute; left: 0; top: 0; width: 1108px; height: 737px; }
.axis { font: 11px "Liberation Sans", sans-serif; fill: #222; }

.legend { position: absolute; top: 41px; font: 12px/14px "Liberation Sans", sans-serif; letter-spacing: .22px; color: #111; }
.legend.left { left: 21px; }
.legend.right { right: 79px; text-align: right; }
.scale { display: flex; margin-top: 10px; }
.legend.left .scale { margin-top: 11px; }
.legend.right .scale { justify-content: flex-end; }
.bar { width: 15px; height: 196px; border: 1px solid #555; background: repeating-linear-gradient(transparent 0 14px, rgba(50,50,50,.65) 14px 15px), linear-gradient(#f00, #ff0 27%, #0f0 51%, #0fa 63%, #0ff 75%, #08f 86%, #00f); flex: none; }
.vals { display: flex; flex-direction: column; letter-spacing: .3px; }
.vals span { height: 15px; line-height: 15px; position: relative; }
.legend.left .vals { margin-left: 7px; margin-top: -7px; }
.legend.right .vals { margin-right: 7px; margin-top: -7px; }
.vals span::before { content: ""; position: absolute; top: 7px; width: 4px; height: 1px; background: #555; }
.legend.left .vals span::before { left: -7px; }
.legend.right .vals span::before { right: -7px; }

.tag { position: absolute; background: #ffffcc; border: 1px solid; border-color: #555 #333 #333 #555; font: 12px/19px "Liberation Sans", sans-serif; letter-spacing: 1.100px; padding: 0 3px 0 4px; white-space: nowrap; color: #000; }
.tag1 { left: 481px; top: 276px; height: 20px; width: 73px; }
.tag2 { left: 782px; top: 510px; height: 21px; width: 51px; }
.nav { position: absolute; width: 14px; height: 12px; top: 715px; display: block; }
.navl { left: 1017px; }
.navr { left: 1053px; }

/* right toolbars */
.sidebar { flex: 1; display: flex; flex-direction: column; padding-top: 3px; background: #f0f0f0; }
.hgrip { height: 5px; margin: 0 2px 4px 4px; border: 1px solid #a8a8a8; background: #f4f4f4; flex: none; width: 39px; }
.sb { height: 30px; flex: none; display: flex; align-items: center; padding-left: 5px; }
.sb .dd { width: 12px; }
.eyewrap { padding-left: 2px; }
.eyebtn { width: 30px; height: 30px; display: flex; align-items: center; justify-content: center; border-right: 1px solid #aaa; border-bottom: 1px solid #aaa; background: #f4f4f4; }
.eyedd { width: 12px; height: 30px; display: flex; align-items: center; justify-content: center; border-right: 1px solid #aaa; border-bottom: 1px solid #aaa; }
.hrule { height: 1px; background: #a0a0a0; margin: 1px 0 4px; flex: none; }
.pressed { width: 30px; height: 29px; margin-left: -3px; display: flex; align-items: center; justify-content: center; border: 1px solid #b8b8b8; border-right-color: #e4e4e4; border-bottom-color: #e4e4e4; background: repeating-conic-gradient(#f0f0f0 0 25%, #fafafa 0 50%) 0 0 / 2px 2px; }
.status { height: 19px; flex: none; background: #f0f0f0; }
```
